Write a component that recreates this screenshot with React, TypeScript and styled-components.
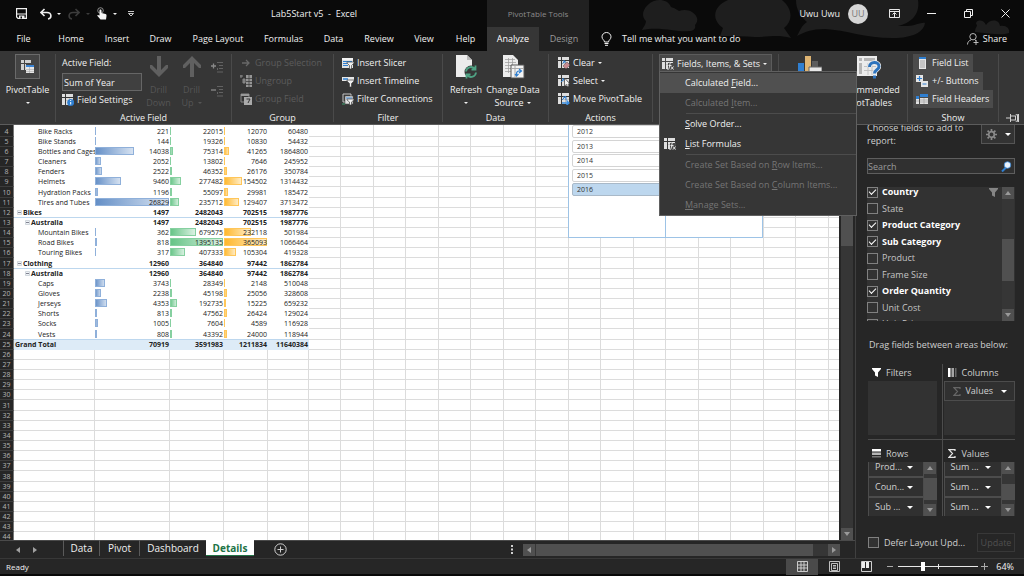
import React from 'react';
import styled, { createGlobalStyle, css } from 'styled-components';

const Global = createGlobalStyle`
  *, *::before, *::after { box-sizing: border-box; }
  body { margin: 0; background: #0a0a0a; }
  button, input { font: inherit; color: inherit; margin: 0; }
  button { background: none; border: 0; padding: 0; }
  svg { display: block; flex: none; }
`;

const Window = styled.div`
  display: flex;
  flex-direction: column;
  height: 100vh;
  overflow: hidden;
  font-family: "Open Sans", "Noto Sans", sans-serif;
  font-size: 9px;
  line-height: 12px;
  color: #f0f0f0;
  white-space: nowrap;
`;

/* ---------- title bar and tabs ---------- */

const Header = styled.header`
  position: relative;
  flex: none;
  background: #0a0a0a;
`;

const Decor = styled.svg`
  position: absolute;
  top: 0;
  right: 0;
`;

const TitleBar = styled.div`
  position: relative;
  display: grid;
  grid-template-columns: 487px 102px 1fr;
  height: 27px;
`;

const QuickAccess = styled.div`
  display: flex;
  align-items: center;
  padding-left: 16px;
`;

const QuickButton = styled.button<{ $w: number }>`
  width: ${p => p.$w}px;
`;

const DocTitle = styled.h1`
  margin: 0 0 0 auto;
  padding-right: 130px;
  font: inherit;
  white-space: pre;
`;

const ToolsTitle = styled.div`
  display: flex;
  align-items: center;
  justify-content: center;
  background: #212121;
  color: #8c8c8c;
  font-size: 8px;
`;

const Account = styled.div`
  display: flex;
  align-items: center;
  justify-content: flex-end;
`;

const Avatar = styled.span`
  width: 20px;
  height: 20px;
  margin: 0 8px;
  border-radius: 50%;
  background: #d6d6d6;
  color: #777;
  line-height: 20px;
  text-align: center;
`;

const WindowButton = styled.button`
  display: grid;
  place-items: center;
  width: 37px;
  height: 27px;
`;

const TabBar = styled.nav`
  position: relative;
  display: flex;
  height: 24px;
`;

const Tab = styled.button<{ $w: number; $active?: boolean; $tool?: boolean }>`
  width: ${p => p.$w}px;
  height: 24px;
  ${p => p.$tool && css`background: #212121; color: #9a9a9a;`}
  ${p => p.$active && css`background: #363636; color: #fff;`}
`;

const TellMe = styled.button`
  display: flex;
  align-items: center;
  gap: 10px;
  margin-left: 12px;
`;

const Share = styled.button`
  display: flex;
  align-items: center;
  gap: 4px;
  margin: 0 17px 0 auto;
`;

/* ---------- ribbon ---------- */

const Ribbon = styled.section`
  position: relative;
  z-index: 3;
  display: flex;
  flex: none;
  height: 74px;
  padding-top: 3px;
  background: #363636;
  border-bottom: 1px solid #5c5c5c;
`;

const Group = styled.div<{ $w: number }>`
  position: relative;
  display: flex;
  flex-direction: column;
  flex: none;
  width: ${p => p.$w}px;
  height: 68px;
  border-right: 1px solid #4a4a4a;
`;

const GroupBody = styled.div<{ $left?: number }>`
  display: flex;
  flex: none;
  align-items: flex-start;
  height: 58px;
  padding-left: ${p => p.$left ?? 7}px;
`;

const GroupLabel = styled.div`
  flex: none;
  text-align: center;
`;

const Stack = styled.div<{ $w?: number }>`
  display: flex;
  flex-direction: column;
  align-items: flex-start;
  width: ${p => (p.$w ? `${p.$w}px` : 'auto')};
`;

const SmallButton = styled.button<{ $dim?: boolean; $on?: boolean }>`
  display: flex;
  align-items: center;
  gap: 3px;
  height: 18px;
  color: ${p => (p.$dim ? '#5c5c5c' : 'inherit')};
  ${p => p.$on && css`background: #4b4b4b; padding: 0 4px 0 3px; gap: 4px;`}
`;

const BigButton = styled.button<{ $w: number; $dim?: boolean }>`
  display: flex;
  flex-direction: column;
  align-items: center;
  width: ${p => p.$w}px;
  flex: none;
  color: ${p => (p.$dim ? '#555' : 'inherit')};
`;

const BigIcon = styled.span<{ $framed?: boolean }>`
  display: grid;
  place-items: center;
  width: 25px;
  height: 25px;
  margin-bottom: 4px;
  ${p => p.$framed && css`background: #444; border: 1px solid #6a6a6a;`}
`;

const Line = styled.span`
  display: flex;
  align-items: center;
  gap: 4px;
  height: 13px;
`;

const FieldLabel = styled.label`
  height: 19px;
  line-height: 18px;
`;

const FieldInput = styled.input`
  width: 80px;
  height: 18px;
  padding: 0 1px;
  background: #404040;
  border: 1px solid #666;
`;

const IconColumn = styled.div`
  display: flex;
  flex-direction: column;
  gap: 13px;
  padding: 8px 0 0 3px;
`;

const DropButton = styled.button`
  display: flex;
  align-items: center;
  gap: 3px;
  width: 113px;
  height: 18px;
  padding-left: 2px;
  background: #484848;
  border: 1px solid #5c5c5c;
  border-bottom: 0;
`;

const PinButton = styled.button`
  margin: auto 5px 2px auto;
`;

const Menu = styled.div`
  position: absolute;
  top: 17px;
  left: 6px;
  z-index: 5;
  width: 198px;
  padding-top: 1px;
  background: #363636;
  border: 1px solid #606060;
`;

const MenuItem = styled.button<{ $active?: boolean; $dim?: boolean }>`
  display: grid;
  grid-template-columns: 21px 1fr;
  align-items: center;
  width: 100%;
  height: 20px;
  padding-left: 4px;
  text-align: left;
  background: ${p => (p.$active ? '#505050' : 'transparent')};
  color: ${p => (p.$dim ? '#757575' : 'inherit')};
`;

const MenuRule = styled.hr`
  margin: 0 0 0 26px;
  border: 0;
  border-top: 1px solid #4c4c4c;
`;

/* ---------- worksheet ---------- */

const Main = styled.main`
  display: grid;
  grid-template-columns: minmax(0, 1fr) 169px;
  flex: 1;
  min-height: 0;
  background: #262626;
`;

const Workbook = styled.div`
  display: flex;
  flex-direction: column;
  min-width: 0;
  min-height: 0;
`;

const SheetArea = styled.div`
  display: flex;
  flex: 1;
  min-height: 0;
`;

const Sheet = styled.div`
  position: relative;
  flex: 1;
  min-width: 0;
  overflow: hidden;
  background: #fff;
`;

const Cells = styled.table`
  width: 1869px;
  table-layout: fixed;
  border-collapse: separate;
  border-spacing: 0;
  font-size: 7px;
  line-height: 9px;
  color: #222;
`;

const SheetRow = styled.tr`
  height: 10px;
  &:nth-child(7n) { height: 11px; }
  &:first-child { height: 12px; vertical-align: bottom; }
`;

const RowHead = styled.th`
  padding: 0;
  background: #262626;
  border-right: 1px solid #777;
  border-bottom: 1px solid #3c3c3c;
  color: #b5b5b5;
  font-weight: 400;
  text-align: center;
`;

const Cell = styled.td<{ $bold?: boolean; $line?: boolean; $total?: boolean; $indent?: number }>`
  padding: 0 1px 0 ${p => p.$indent ?? 0}px;
  font-weight: ${p => (p.$bold ? 700 : 400)};
  border-bottom: 1px solid ${p => (p.$line ? '#bdd7ee' : 'transparent')};
  background: ${p => (p.$total ? '#ddebf7' : '#fff')};
`;

const BlankCell = styled.td`
  padding: 0;
  border-right: 1px solid #dcdcdc;
  border-bottom: 1px solid #dcdcdc;
`;

const Name = styled.span`
  display: flex;
  align-items: center;
  gap: 1px;
  height: 9px;
`;

const Figure = styled.span`
  display: grid;
  grid-template-columns: 1fr;
  height: 9px;
`;

const Amount = styled.span`
  grid-area: 1 / 1;
  z-index: 1;
  text-align: right;
`;

const Bar = styled.span<{ $hue: 'blue' | 'green' | 'orange' }>`
  grid-area: 1 / 1;
  height: 8px;
  min-width: 1px;
  ${p => p.$hue === 'blue' && css`background: linear-gradient(90deg, #638ec6, #d9e4f2); box-shadow: inset 0 0 0 1px #8fb0da;`}
  ${p => p.$hue === 'green' && css`background: linear-gradient(90deg, #63c384, #dff3e6); box-shadow: inset 0 0 0 1px #86d0a0;`}
  ${p => p.$hue === 'orange' && css`background: linear-gradient(90deg, #ffb628, #fff0d0); box-shadow: inset 0 0 0 1px #ffc659;`}
`;

const Slicers = styled.div`
  position: absolute;
  top: 0;
  left: 568px;
  display: flex;
  height: 113px;
  font-size: 7px;
  color: #333;
`;

const Slicer = styled.div`
  display: flex;
  flex-direction: column;
  width: 98px;
  margin-right: -1px;
  padding: 0 3px;
  background: #fff;
  border: 1px solid #9dc3e6;
  border-top: 0;
`;

const SlicerList = styled.div`
  display: flex;
  flex-direction: column;
  justify-content: space-between;
  height: 71px;
`;

const SlicerItem = styled.button<{ $on?: boolean }>`
  height: 13px;
  padding-left: 4px;
  border: 1px solid ${p => (p.$on ? '#a9b9c8' : '#d4d4d4')};
  border-radius: 2px;
  background: ${p => (p.$on ? '#bdd7ee' : '#fff')};
  line-height: 11px;
  text-align: left;
`;

const VScroll = styled.div<{ $w: number }>`
  display: flex;
  flex-direction: column;
  flex: none;
  width: ${p => p.$w}px;
  background: #363636;
`;

const SheetScroll = styled(VScroll)`
  margin: 0 2px;
`;

const ScrollButton = styled.button`
  display: grid;
  place-items: center;
  flex: none;
  width: 12px;
  height: 12px;
  background: #505050;
  color: #9a9a9a;
`;

const Thumb = styled.div<{ $size: number; $start: number }>`
  height: ${p => p.$size}px;
  margin: ${p => p.$start}px 0 auto;
  background: #505050;
`;

const SheetTabs = styled.div`
  display: flex;
  flex: none;
  align-items: center;
  height: 18px;
  padding-right: 15px;
  border-top: 1px solid #4a4a4a;
  font-size: 10px;
`;

const NavArrows = styled.div`
  display: flex;
  gap: 11px;
  width: 63px;
  padding-left: 15px;
  color: #a0a0a0;
`;

const SheetTab = styled.button<{ $w: number; $active?: boolean }>`
  align-self: flex-start;
  width: ${p => p.$w}px;
  height: 16px;
  margin-top: -1px;
  border-left: 1px solid #5a5a5a;
  ${p => p.$active && css`
    background: #fff;
    color: #217346;
    font-weight: 700;
    border-left: 0;
    border-bottom: 1px solid #217346;
  `}
`;

const AddSheet = styled.button`
  margin: 0 auto 0 20px;
`;

const HScroll = styled.div`
  display: flex;
  width: 317px;
  margin-left: 10px;
  background: #363636;
`;

const HThumb = styled.div`
  width: 277px;
  margin: 0 auto 0 1px;
  background: #505050;
`;

/* ---------- field pane ---------- */

const Pane = styled.aside`
  display: flex;
  flex-direction: column;
  min-height: 0;
  padding: 0 9px 0 11px;
  border-left: 1px solid #404040;
  color: #d0d0d0;
  overflow: hidden;
`;

const PaneTop = styled.div`
  display: flex;
  justify-content: space-between;
  height: 33px;
`;

const PaneHint = styled.p`
  width: 105px;
  margin: -4px 0 0;
  line-height: 13px;
  white-space: normal;
`;

const GearButton = styled.button`
  display: flex;
  align-items: center;
  justify-content: center;
  gap: 8px;
  width: 34px;
  height: 19px;
  border: 1px solid #555;
  border-top: 0;
  background: #333;
`;

const SearchBox = styled.label`
  display: flex;
  align-items: center;
  flex: none;
  height: 16px;
  padding-right: 2px;
  background: #303030;
  border: 1px solid #5e5e5e;
`;

const SearchInput = styled.input`
  flex: 1;
  min-width: 0;
  height: 14px;
  padding: 0;
  background: none;
  border: 0;
  &::placeholder { color: #9a9a9a; opacity: 1; }
`;

const FieldBox = styled.div`
  display: flex;
  flex: none;
  height: 134px;
  margin: 13px 0 18px;
  padding-right: 1px;
  overflow: hidden;
  background: #323232;
`;

const FieldRows = styled.div`
  flex: 1;
  margin-top: -3px;
`;

const FieldRow = styled.label<{ $checked: boolean }>`
  display: flex;
  align-items: center;
  gap: 4px;
  height: 16px;
  padding-right: 4px;
  font-weight: ${p => (p.$checked ? 700 : 400)};
  color: ${p => (p.$checked ? '#fff' : '#c4c4c4')};
  &:nth-child(even) { height: 17px; }
  & > svg { margin-left: auto; }
`;

const Check = styled.input`
  appearance: none;
  display: grid;
  place-items: center;
  flex: none;
  width: 11px;
  height: 11px;
  border: 1px solid #808080;
  background: #323232;
  &:checked::before {
    content: "";
    width: 7px;
    height: 4px;
    margin-top: -2px;
    border-left: 1px solid #fff;
    border-bottom: 1px solid #fff;
    transform: rotate(-45deg);
  }
`;

const DragHint = styled.p`
  margin: 0 0 13px 2px;
`;

const Areas = styled.div`
  display: grid;
  grid-template-columns: 1fr 1fr;
  margin-left: 1px;
`;

const Area = styled.section<{ $right?: boolean; $low?: boolean }>`
  padding: ${p => (p.$low ? '5px' : '0')} ${p => (p.$right ? '0' : '5px')} ${p => (p.$low ? '0' : '4px')} ${p => (p.$right ? '1px' : '0')};
  ${p => p.$right && css`border-left: 1px solid #4c4c4c;`}
  ${p => p.$low && css`border-top: 1px solid #4c4c4c;`}
`;

const AreaTitle = styled.h2`
  display: grid;
  grid-template-columns: 14px 1fr;
  align-items: center;
  height: 17px;
  margin: 0;
  padding-left: 4px;
  font: inherit;
`;

const AreaBox = styled.div`
  display: flex;
  height: 54px;
  overflow: hidden;
  background: #323232;
`;

const Chips = styled.div<{ $scrolled?: boolean }>`
  display: flex;
  flex: 1;
  flex-direction: column;
  margin-top: ${p => (p.$scrolled ? '-5px' : '0')};
`;

const Chip = styled.button`
  display: flex;
  align-items: center;
  justify-content: space-between;
  flex: none;
  height: 20px;
  padding: 0 10px 0 6px;
  border: 1px solid #4c4c4c;
  background: #303030;
`;

const ValuesChip = styled(Chip)`
  justify-content: flex-start;
  gap: 5px;
  padding: 0 7px 0 8px;
  & > :last-child { margin-left: auto; }
`;

const PaneFoot = styled.div`
  display: flex;
  align-items: center;
  justify-content: space-between;
  margin: 17px 0 0 1px;
`;

const Defer = styled.label`
  display: flex;
  align-items: center;
  gap: 5px;
`;

const UpdateButton = styled.button`
  width: 38px;
  height: 19px;
  border: 1px solid #383838;
  color: #505050;
`;

/* ---------- status bar ---------- */

const StatusBar = styled.footer`
  display: flex;
  align-items: center;
  flex: none;
  height: 18px;
  padding: 0 10px 0 6px;
  background: #262626;
  border-top: 1px solid #383838;
  border-bottom: 2px solid #080808;
  font-size: 8px;
`;

const ViewButton = styled.button<{ $on?: boolean }>`
  display: grid;
  place-items: center;
  width: 32px;
  height: 16px;
  background: ${p => (p.$on ? '#4a4a4a' : 'transparent')};
`;

const Views = styled.div`
  display: flex;
  margin: 0 5px 0 auto;
`;

const Zoom = styled.input`
  appearance: none;
  width: 80px;
  height: 10px;
  margin: 0 3px 0 4px;
  background: linear-gradient(#e8e8e8, #e8e8e8) center / 100% 1px no-repeat,
    linear-gradient(#e8e8e8, #e8e8e8) center / 1px 5px no-repeat;
  &::-webkit-slider-thumb {
    appearance: none;
    width: 4px;
    height: 9px;
    background: #fff;
  }
`;

const ZoomValue = styled.span`
  width: 26px;
  font-size: 9px;
  text-align: right;
`;

/* ---------- icons ---------- */

const Caret = ({ w = 4, color = 'currentColor' }: { w?: number; color?: string }) => (
  <svg width={w} height={Math.ceil(w / 2)} viewBox="0 0 4 2"><path d="M0 0h4L2 2z" fill={color} /></svg>
);

const Arrow = ({ dir }: { dir: 'up' | 'down' | 'left' | 'right' }) => {
  const d = { up: 'M0 5h6L3 1z', down: 'M0 1h6L3 5z', left: 'M5 0v6L1 3z', right: 'M1 0v6l4-3z' }[dir];
  return <svg width="6" height="6" viewBox="0 0 6 6"><path d={d} fill="currentColor" /></svg>;
};

const Pivot = ({ children }: { children?: React.ReactNode }) => (
  <svg width="12" height="12" viewBox="0 0 12 12">
    <path d="M0 0h3v3H0zM4 0h7v3H4zM0 4h3v7H0zM4 4h7v7H4z" fill="#dedede" />
    <path d="M4 6.500h7M7.500 4v7" stroke="#a0a0a0" strokeWidth=".5" />
    {children}
  </svg>
);

const PivotTableIcon = () => (
  <svg width="13" height="13" viewBox="0 0 13 13">
    <path d="M0 0h3v3H0zM4 0h6v3H4zM0 4h3v6H0zM4 4h1v6H4z" fill="#d0d0d0" />
    <path d="M5 5h8v8H5z" fill="#e6e6e6" /><path d="M5 5h8v2H5z" fill="#3b84d4" />
    <path d="M5 9.500h8M5 11.500h8M8.500 7v6" stroke="#aaa" strokeWidth=".6" />
  </svg>
);

const SettingsIcon = () => (
  <Pivot><circle cx="8.700" cy="8.500" r="3.500" fill="#2f7fd1" /><path d="M8.700 8v2.500M8.700 6v1" stroke="#fff" /></Pivot>
);

const BigArrow = ({ up }: { up?: boolean }) => (
  <svg width="20" height="23" viewBox="0 0 20 23">
    <path d={up ? 'M8 22V8L3 13H1v-3L10 1l9 9v3h-2l-5-5v14z' : 'M8 1v14L3 10H1v3l9 9 9-9v-3h-2l-5 5V1z'} fill="#606060" />
  </svg>
);

const Expand = ({ minus }: { minus?: boolean }) => (
  <svg width="12" height="11" viewBox="0 0 12 11" fill="none" stroke="#626262">
    <path d={minus ? 'M0 4h5' : 'M0 4h5M2.500 1.500v5'} stroke="#8a8a8a" strokeWidth="1.300" />
    <path d="M6 .5h6M8 3.500h4M8 6.500h4M6 10h6M6.500 6v2" />
  </svg>
);

const GroupArrow = () => <svg width="12" height="8" viewBox="0 0 12 8" fill="none" stroke="#686868" strokeWidth="1.300"><path d="M2 4h7M6 1l3 3-3 3" /></svg>;
const UngroupIcon = () => (
  <svg width="12" height="12" viewBox="0 0 12 12"><path d="M0 1h3M1 0v3M3 4h2v4H3z" stroke="#8a8a8a" fill="#777" /><path d="M6 0h6v12H6z" fill="#969696" /><path d="M6 3.500h6M6 6.500h6M6 9.500h6M9 0v12" stroke="#363636" strokeWidth=".7" /></svg>
);
const GroupFieldIcon = () => (
  <svg width="12" height="12" viewBox="0 0 12 12"><path d="M1 1h8v8H1z" fill="none" stroke="#888" /><path d="M1 1h8v2H1z" fill="#999" /><path d="M4 4h8v8H4z" fill="#aaa" /><path d="M6.500 6H10L8 10" fill="none" stroke="#363636" /></svg>
);

const Funnel = ({ size = 9, color = '#fff' }: { size?: number; color?: string }) => (
  <svg width={size} height={size} viewBox="0 0 9 9"><path d="M0 0h9v1L6 4.500V9L3 7.500v-3L0 1z" fill={color} /></svg>
);

const SlicerIcon = () => (
  <svg width="12" height="12" viewBox="0 0 12 12"><path d="M0 1h11v10H0z" fill="#e2e2e2" /><path d="M0 1h11v2H0z" fill="#f4f4f4" /><path d="M1 4.500h9M1 6.500h4M1 8.500h5" stroke="#2f7fd1" /><path d="M5 5h7v1L9.500 8.500V12h-2V8.500L5 6z" fill="#f0f0f0" stroke="#444" strokeWidth=".7" /></svg>
);
const TimelineIcon = () => (
  <svg width="12" height="12" viewBox="0 0 12 12"><path d="M0 2h12v4H0z" fill="#e6e6e6" /><path d="M1 4h5" stroke="#2f7fd1" strokeWidth="1.500" /><path d="M5 5h7v1L9.500 8.500V12h-2V8.500L5 6z" fill="#f0f0f0" stroke="#444" strokeWidth=".7" /></svg>
);
const ConnectionsIcon = () => (
  <svg width="12" height="12" viewBox="0 0 12 12"><path d="M1 1h8v8H1z" fill="none" stroke="#c4c4c4" /><path d="M3 3h8v8H3z" fill="#e2e2e2" stroke="#555" strokeWidth=".6" /><path d="M4 5h6" stroke="#2f7fd1" /><path d="M5 6h7v1L9.500 9v3h-2V9L5 7z" fill="#f0f0f0" stroke="#444" strokeWidth=".7" /><path d="M0 11h3" stroke="#3f9f6f" /></svg>
);

const RefreshIcon = () => (
  <svg width="22" height="25" viewBox="0 0 22 25">
    <path d="M1 1h11l5 5v17H1z" fill="#ececec" /><path d="M12 1v5h5" fill="#bbb" />
    <circle cx="16" cy="18" r="6.500" fill="#363636" />
    <path d="M11 17.500a5 5 0 018.500-3M20.500 11.500v4h-4M21 18.500a5 5 0 01-8.500 3M11.500 24.500v-4h4" fill="none" stroke="#4fa384" strokeWidth="1.800" />
  </svg>
);
const ChangeSourceIcon = () => (
  <svg width="24" height="25" viewBox="0 0 24 25">
    <path d="M2 1h10l5 5v17H2z" fill="#ececec" /><path d="M4 5.500h10M4 8.500h11M4 11.500h11M4 14.500h11M4 17.500h11M7.500 4v15M11.500 4v15" stroke="#999" strokeWidth=".7" />
    <path d="M10 11h13v13H10z" fill="#f3f3f3" stroke="#555" /><path d="M11 14.500h11M14 12v12" stroke="#aaa" />
    <path d="M15.500 22v-2c0-2 1-3 2.500-3h2M18 15l2.500 2-2.500 2M14 20l1.500 2 2-2" fill="none" stroke="#2f7fd1" strokeWidth="1.200" />
  </svg>
);
const ClearIcon = () => <Pivot><path d="M4.500 6.500l2.500-2.500M5 4h2v2" stroke="#2f7fd1" fill="none" /><path d="M9 5l3 3-4 4-3-3z" fill="#c98a90" stroke="#363636" strokeWidth=".4" /></Pivot>;
const SelectIcon = () => <Pivot><path d="M3 7l3-3M4 4h2v2" stroke="#2f7fd1" fill="none" /><path d="M6.500 3v8l2-1.500 1 2.500 1.500-.7-1-2.300H12z" fill="#f4f4f4" stroke="#363636" strokeWidth=".7" /></Pivot>;
const MoveIcon = () => <Pivot><path d="M4 7l4-4M5 4h3v3" stroke="#2f7fd1" fill="none" /><path d="M4 10h7M8.500 7.500L11 10l-2.500 2" stroke="#3b8ee0" strokeWidth="1.400" fill="none" /></Pivot>;
const FieldsIcon = () => <Pivot><path d="M6 5h6v7H6z" fill="#4b4b4b" /><path d="M10 4.500c-2-.5-2 1-2.300 3S7 12 5.500 11.500M6.500 7.500h3M9 8.500l2.500 3M11.500 8.500L9 11.500" stroke="#f0f0f0" fill="none" strokeWidth=".9" /></Pivot>;

const ChartIcon = () => (
  <svg width="25" height="25" viewBox="0 0 25 25"><path d="M1 9h6v14H1z" fill="#2f7fd1" /><path d="M8 2h6v21H8z" fill="#dfb573" /><path d="M15 7h6v16h-6z" fill="#5c5c5c" /><path d="M12 13h13v10H12z" fill="#e8e8e8" stroke="#666" /></svg>
);
const RecommendIcon = () => (
  <svg width="25" height="25" viewBox="0 0 25 25"><path d="M1 2h20v20H1z" fill="#ececec" /><path d="M3 4h3v3H3zM8 4h11v3H8zM3 9h3v11H3z" fill="#b5b5b5" /><path d="M8 12.500h12M8 16.500h12M12 9v12M16 9v12" stroke="#c2c2c2" /><path d="M13.500 13c0-6 9.500-6 9.500-.5 0 3.500-4.500 3-4.500 7" fill="none" stroke="#ececec" strokeWidth="4.500" /><path d="M13.500 13c0-6 9.500-6 9.500-.5 0 3.500-4.500 3-4.500 7M18.500 21.500v3" fill="none" stroke="#2d73bd" strokeWidth="3" /></svg>
);
const FieldListIcon = () => (
  <svg width="12" height="12" viewBox="0 0 12 12"><path d="M3 0h7v12H3z" fill="#e6e6e6" /><path d="M3 0h7v2H3z" fill="#2f7fd1" /><path d="M4 4h5M4 6h5M4 8h5M4 10h5" stroke="#888" strokeWidth=".7" /></svg>
);
const PlusMinusIcon = () => (
  <svg width="12" height="12" viewBox="0 0 12 12"><path d="M0 0h7v7H0zM5 6h7v6H5z" fill="#e6e6e6" /><path d="M1 3.500h5M3.500 1v5M6.500 9h4" stroke="#2f7fd1" strokeWidth="1.200" /></svg>
);
const HeadersIcon = () => (
  <svg width="12" height="12" viewBox="0 0 12 12"><path d="M0 5h3v6H0zM4 5h8v6H4z" fill="#e0e0e0" /><path d="M0 3h3v3H0zM4 1h8v3H4z" fill="#2f7fd1" /><path d="M4 7h8M4 9h8M8 5v6M0 8h3" stroke="#999" strokeWidth=".6" /></svg>
);

const Bulb = () => (
  <svg width="11" height="14" viewBox="0 0 11 14" fill="none" stroke="#f0f0f0"><path d="M3.500 10C3.500 8 1 7.500 1 4.800a4.500 4.300 0 019 0C10 7.500 7.500 8 7.500 10zM3.500 11.500h4M4 13.300h3" /></svg>
);
const ShareIcon = () => (
  <svg width="12" height="12" viewBox="0 0 12 12" fill="none" stroke="#c8c8c8" strokeWidth=".9"><circle cx="6" cy="3.700" r="3.200" /><path d="M.5 11.500c0-2.500 1.500-4 3.500-4.500M8 7l1.500 1M6.500 9.500h5M9 7v5" /></svg>
);
const Pin = () => <svg width="13" height="8" viewBox="0 0 13 8" fill="none" stroke="#d0d0d0"><path d="M0 4h4.500M4.500 0v8M4.500 2h5v4h-5M9.500 1l2-.5v7L9.500 7M12.500 0v8" /></svg>;

const Gear = () => (
  <svg width="11" height="11" viewBox="0 0 11 11"><circle cx="5.500" cy="5.500" r="2.800" fill="none" stroke="#8a8a8a" strokeWidth="1.700" /><path d="M5.500 0v2M5.500 9v2M0 5.500h2M9 5.500h2M1.600 1.600l1.500 1.500M7.900 7.900l1.500 1.500M1.600 9.400l1.500-1.500M7.900 3.100l1.500-1.500" stroke="#8a8a8a" strokeWidth="1.700" /></svg>
);
const SearchIcon = () => <svg width="11" height="11" viewBox="0 0 11 11"><path d="M1 10.500L5 6.500" stroke="#2f7fd1" strokeWidth="2" /><circle cx="6.500" cy="4" r="3.300" fill="#e8f2fc" stroke="#2f7fd1" strokeWidth=".8" /></svg>;
const ColumnsIcon = () => <svg width="9" height="9" viewBox="0 0 9 9"><path d="M0 0h2.500v9H0z" fill="#fff" /><path d="M3.500 0H6v9H3.500z" fill="#a5a5a5" /><path d="M7 0h1.500v9H7z" fill="#666" /></svg>;
const RowsIcon = () => <svg width="9" height="9" viewBox="0 0 9 9"><path d="M0 0h9v2.500H0z" fill="#fff" /><path d="M0 3.500h9V6H0z" fill="#b5b5b5" /><path d="M0 7h9v1.500H0z" fill="#777" /></svg>;
const Sigma = ({ color = '#e6e6e6' }: { color?: string }) => <svg width="8" height="9" viewBox="0 0 8 9"><path d="M7 2V.7H1L4.500 4.500 1 8.300h6V7" fill="none" stroke={color} strokeWidth="1.200" /></svg>;

/* ---------- data ---------- */

type Row = { name: string; level: 0 | 1 | 2; v: [number, number, number, number]; total?: boolean };

const rows: Row[] = [
  { name: 'Bike Racks', level: 2, v: [221, 22015, 12070, 60480] },
  { name: 'Bike Stands', level: 2, v: [144, 19326, 10830, 54432] },
  { name: 'Bottles and Cages', level: 2, v: [14038, 75314, 41265, 1864800] },
  { name: 'Cleaners', level: 2, v: [2052, 13802, 7646, 245952] },
  { name: 'Fenders', level: 2, v: [2522, 46352, 26176, 350784] },
  { name: 'Helmets', level: 2, v: [9460, 277482, 154502, 1314432] },
  { name: 'Hydration Packs', level: 2, v: [1196, 55097, 29981, 185472] },
  { name: 'Tires and Tubes', level: 2, v: [26829, 235712, 129407, 3713472] },
  { name: 'Bikes', level: 0, v: [1497, 2482043, 702515, 1987776] },
  { name: 'Australia', level: 1, v: [1497, 2482043, 702515, 1987776] },
  { name: 'Mountain Bikes', level: 2, v: [362, 679575, 232118, 501984] },
  { name: 'Road Bikes', level: 2, v: [818, 1395135, 365093, 1066464] },
  { name: 'Touring Bikes', level: 2, v: [317, 407333, 105304, 419328] },
  { name: 'Clothing', level: 0, v: [12960, 364840, 97442, 1862784] },
  { name: 'Australia', level: 1, v: [12960, 364840, 97442, 1862784] },
  { name: 'Caps', level: 2, v: [3743, 28349, 2148, 510048] },
  { name: 'Gloves', level: 2, v: [2238, 45198, 25056, 328608] },
  { name: 'Jerseys', level: 2, v: [4353, 192735, 15225, 659232] },
  { name: 'Shorts', level: 2, v: [813, 47562, 26424, 129024] },
  { name: 'Socks', level: 2, v: [1005, 7604, 4589, 116928] },
  { name: 'Vests', level: 2, v: [808, 43392, 24000, 118944] },
  { name: 'Grand Total', level: 0, v: [70919, 3591983, 1211834, 11640384], total: true },
];

const FIRST_ROW = 4;
const LAST_ROW = 44;
const EXTRA_COLUMNS = 48;
const hues = ['blue', 'green', 'orange'] as const;
const peaks = [26829, 1395135, 365093];
const indents = { 0: 3, 1: 11, 2: 24 };

const Collapse = () => (
  <svg width="5" height="5" viewBox="0 0 5 5"><path d="M.5.5h4v4h-4z" fill="#eef2f6" stroke="#c0c8d0" strokeWidth=".7" /><path d="M1 2.500h3" stroke="#667" strokeWidth=".8" /></svg>
);

const Worksheet = () => (
  <Cells>
    <colgroup>
      {[14, 81, 75, 54, 44, 41].map((w, i) => <col key={i} style={{ width: w }} />)}
      {Array.from({ length: EXTRA_COLUMNS }, (_, i) => <col key={i} style={{ width: i % 2 ? 33 : 32 }} />)}
    </colgroup>
    <tbody>
      {Array.from({ length: LAST_ROW - FIRST_ROW + 1 }, (_, i) => {
        const row = rows[i];
        const blanks = row ? EXTRA_COLUMNS : EXTRA_COLUMNS + 5;
        const look = row && {
          $bold: row.level < 2,
          $total: row.total,
          $line: (row.level === 0 && !row.total) || rows[i + 1]?.total,
        };
        return (
          <SheetRow key={i}>
            <RowHead scope="row">{FIRST_ROW + i}</RowHead>
            {row && (
              <Cell {...look} $indent={row.total ? 1 : indents[row.level]}>
                <Name>{row.level < 2 && !row.total && <Collapse />}{row.name}</Name>
              </Cell>
            )}
            {row?.v.map((n, c) => (
              <Cell key={c} {...look}>
                <Figure>
                  {row.level === 2 && c < 3 && (
                    <Bar $hue={hues[c]} style={{ width: `${(n / peaks[c]) * 100}%` }} />
                  )}
                  <Amount>{n}</Amount>
                </Figure>
              </Cell>
            ))}
            {Array.from({ length: blanks }, (_, b) => <BlankCell key={b} />)}
          </SheetRow>
        );
      })}
    </tbody>
  </Cells>
);

const tabs: [string, number][] = [
  ['File', 47], ['Home', 48], ['Insert', 44], ['Draw', 43], ['Page Layout', 72], ['Formulas', 59],
  ['Data', 41], ['Review', 50], ['View', 40], ['Help', 43],
];

const fields: [string, boolean][] = [
  ['Country', true], ['State', false], ['Product Category', true], ['Sub Category', true],
  ['Product', false], ['Frame Size', false], ['Order Quantity', true], ['Unit Cost', false], ['Unit Price', false],
];

const ScrollingArea = ({ names, size, start }: { names: string[]; size: number; start: number }) => (
  <AreaBox>
    <Chips $scrolled>
      {names.map((n, i) => <Chip key={i}>{n}<Caret w={6} color="#fff" /></Chip>)}
    </Chips>
    <VScroll $w={13}>
      <ScrollButton aria-label="Scroll up"><Arrow dir="up" /></ScrollButton>
      <Thumb $size={size} $start={start} />
      <ScrollButton aria-label="Scroll down"><Arrow dir="down" /></ScrollButton>
    </VScroll>
  </AreaBox>
);

export default function App() {
  return (
    <Window>
      <Global />
      <Header>
        <Decor width="420" height="51" viewBox="0 0 420 51">
          <g fill="#1e1e1e">
            <path d="M38 30c2-4 4-6 4-9-8-8 2-18 8-20 6-2 14-1 17 6 6 2 6 3 8 4 8-3 16 1 18 7 1 3-1 6-2 7 1 3-1 6-6 6-10 2-28-5-47-1z" />
            <path d="M124 0h54c12 10 10 22 2 28l7 10c-14-4-22-1-36-1-10-1-22-1-35-1l3-8c-12-8-10-22 5-28z" />
            <path d="M192 0h122c2 12-4 22-20 26h10c6 0 14-4 17-3-1 8-10 14-28 15-30 1-50-8-72-9-14 0-20 3-28 7 3-5 4-10 10-14-7-6-11-13-11-22z" />
            <path d="M371 32c0-4 2-5 2-7-4-4 6-8 9 0 4-6 13-6 14 1 6-1 10 2 9 7-8 3-20 0-34-1z" />
          </g>
        </Decor>
        <TitleBar>
          <QuickAccess>
            <QuickButton $w={24} aria-label="Save">
              <svg width="11" height="11" viewBox="0 0 11 11"><path d="M.6.6h9.800v9.800H2L.6 9z" fill="none" stroke="#f0f0f0" strokeWidth="1.200" /><path d="M1 5.500h9v1H1zM3 7.500h5.500V11H3z" fill="#f0f0f0" /><path d="M4.500 8.500h1.500v2H4.500z" fill="#0a0a0a" /></svg>
            </QuickButton>
            <QuickButton $w={17} aria-label="Undo">
              <svg width="12" height="12" viewBox="0 0 12 12" fill="none" stroke="#f0f0f0" strokeWidth="1.600"><path d="M4.500 1L1 4.500 4.500 8M1.500 4.500H7c5 0 5 6 1 6.500" /></svg>
            </QuickButton>
            <QuickButton $w={11} aria-label="Undo list"><Caret /></QuickButton>
            <QuickButton $w={18} aria-label="Redo">
              <svg width="12" height="12" viewBox="0 0 12 12" fill="none" stroke="#3c3c3c" strokeWidth="1.600"><path d="M7.500 1L11 4.500 7.500 8M10.500 4.500H5c-5 0-5 6-1 6.500" /></svg>
            </QuickButton>
            <QuickButton $w={11} aria-label="Redo list"><Caret color="#3c3c3c" /></QuickButton>
            <QuickButton $w={16} aria-label="Touch mode">
              <svg width="10" height="13" viewBox="0 0 10 13"><circle cx="3.500" cy="3.500" r="2.800" fill="none" stroke="#aaa" strokeWidth=".8" /><path d="M2.500 3.500c0-1.500 2-1.500 2 0V6l4 1c1 .3 1 1 1 2L9 12.500H3.500L.5 9c-.5-1 .5-1.500 2-.5z" fill="#f4f4f4" /></svg>
            </QuickButton>
            <QuickButton $w={15} aria-label="Touch mode list"><Caret /></QuickButton>
            <QuickButton $w={8} aria-label="Customize toolbar">
              <svg width="6" height="6" viewBox="0 0 6 6" fill="none" stroke="#ddd" strokeWidth=".9"><path d="M0 .5h6M.5 2.500h5L3 5z" /></svg>
            </QuickButton>
            <DocTitle>Lab5Start v5  -  Excel</DocTitle>
          </QuickAccess>
          <ToolsTitle>PivotTable Tools</ToolsTitle>
          <Account>
            Uwu Uwu<Avatar>UU</Avatar>
            <WindowButton aria-label="Ribbon display options">
              <svg width="11" height="9" viewBox="0 0 11 9" fill="none" stroke="#e8e8e8"><path d="M.5.5h10v8H.5zM.5 2.500h10M5.500 8V4M3.500 5.500l2-2 2 2" /></svg>
            </WindowButton>
            <WindowButton aria-label="Minimize">
              <svg width="9" height="9" viewBox="0 0 9 9"><path d="M0 4.500h9" stroke="#f0f0f0" /></svg>
            </WindowButton>
            <WindowButton aria-label="Restore">
              <svg width="9" height="9" viewBox="0 0 9 9" fill="none" stroke="#f0f0f0"><path d="M.5 2.500h6v6h-6zM2.500 2V.5h6v6H7" /></svg>
            </WindowButton>
            <WindowButton aria-label="Close">
              <svg width="9" height="9" viewBox="0 0 9 9"><path d="M.5.5l8 8M8.500.5l-8 8" stroke="#f0f0f0" /></svg>
            </WindowButton>
          </Account>
        </TitleBar>
        <TabBar>
          {tabs.map(([t, w]) => <Tab key={t} $w={w}>{t}</Tab>)}
          <Tab $w={52} $tool $active>Analyze</Tab>
          <Tab $w={50} $tool>Design</Tab>
          <TellMe><Bulb />Tell me what you want to do</TellMe>
          <Share><ShareIcon />Share</Share>
        </TabBar>
      </Header>

      <Ribbon>
        <Group $w={56}>
          <GroupBody $left={0}>
            <BigButton $w={55}>
              <BigIcon $framed><PivotTableIcon /></BigIcon>
              <Line>PivotTable</Line><Line><Caret /></Line>
            </BigButton>
          </GroupBody>
        </Group>
        <Group $w={176}>
          <GroupBody $left={6}>
            <Stack $w={80}>
              <FieldLabel htmlFor="active-field">Active Field:</FieldLabel>
              <FieldInput id="active-field" defaultValue="Sum of Year" />
              <SmallButton><SettingsIcon />Field Settings</SmallButton>
            </Stack>
            <BigButton $w={33} $dim>
              <BigIcon><BigArrow /></BigIcon><Line>Drill</Line><Line>Down</Line>
            </BigButton>
            <BigButton $w={33} $dim>
              <BigIcon><BigArrow up /></BigIcon><Line>Drill</Line><Line>Up <Caret /></Line>
            </BigButton>
            <IconColumn><Expand /><Expand minus /></IconColumn>
          </GroupBody>
          <GroupLabel>Active Field</GroupLabel>
        </Group>
        <Group $w={102}>
          <GroupBody $left={8}>
            <Stack>
              <SmallButton $dim><GroupArrow />Group Selection</SmallButton>
              <SmallButton $dim><UngroupIcon />Ungroup</SmallButton>
              <SmallButton $dim><GroupFieldIcon />Group Field</SmallButton>
            </Stack>
          </GroupBody>
          <GroupLabel>Group</GroupLabel>
        </Group>
        <Group $w={109}>
          <GroupBody $left={8}>
            <Stack>
              <SmallButton><SlicerIcon />Insert Slicer</SmallButton>
              <SmallButton><TimelineIcon />Insert Timeline</SmallButton>
              <SmallButton><ConnectionsIcon />Filter Connections</SmallButton>
            </Stack>
          </GroupBody>
          <GroupLabel>Filter</GroupLabel>
        </Group>
        <Group $w={106}>
          <GroupBody $left={5}>
            <BigButton $w={36}>
              <BigIcon><RefreshIcon /></BigIcon><Line>Refresh</Line><Line><Caret /></Line>
            </BigButton>
            <BigButton $w={58}>
              <BigIcon><ChangeSourceIcon /></BigIcon><Line>Change Data</Line><Line>Source <Caret /></Line>
            </BigButton>
          </GroupBody>
          <GroupLabel>Data</GroupLabel>
        </Group>
        <Group $w={104}>
          <GroupBody $left={9}>
            <Stack>
              <SmallButton><ClearIcon />Clear <Caret /></SmallButton>
              <SmallButton><SelectIcon />Select <Caret /></SmallButton>
              <SmallButton><MoveIcon />Move PivotTable</SmallButton>
            </Stack>
          </GroupBody>
          <GroupLabel>Actions</GroupLabel>
        </Group>
        <Group $w={126}>
          <GroupBody $left={6}>
            <DropButton aria-expanded="true"><FieldsIcon />Fields, Items, &amp; Sets <Caret /></DropButton>
          </GroupBody>
          <Menu role="menu">
            <MenuItem role="menuitem" $active><i /><span>Calculated <u>F</u>ield...</span></MenuItem>
            <MenuItem role="menuitem" $dim><i /><span>Calculated <u>I</u>tem...</span></MenuItem>
            <MenuRule />
            <MenuItem role="menuitem"><i /><span><u>S</u>olve Order...</span></MenuItem>
            <MenuItem role="menuitem"><FieldsIcon /><span><u>L</u>ist Formulas</span></MenuItem>
            <MenuRule />
            <MenuItem role="menuitem" $dim><i /><span>Create Set Based on <u>R</u>ow Items...</span></MenuItem>
            <MenuItem role="menuitem" $dim><i /><span>Create Set Based on <u>C</u>olumn Items...</span></MenuItem>
            <MenuItem role="menuitem" $dim><i /><span><u>M</u>anage Sets...</span></MenuItem>
          </Menu>
        </Group>
        <Group $w={129}>
          <GroupBody $left={0}>
            <BigButton $w={61} aria-label="PivotChart"><BigIcon><ChartIcon /></BigIcon></BigButton>
            <BigButton $w={56}>
              <BigIcon><RecommendIcon /></BigIcon><Line>Recommended</Line><Line>PivotTables</Line>
            </BigButton>
          </GroupBody>
        </Group>
        <Group $w={91}>
          <GroupBody $left={5}>
            <Stack>
              <SmallButton $on><FieldListIcon />Field List</SmallButton>
              <SmallButton $on><PlusMinusIcon />+/- Buttons</SmallButton>
              <SmallButton $on><HeadersIcon />Field Headers</SmallButton>
            </Stack>
          </GroupBody>
          <GroupLabel>Show</GroupLabel>
        </Group>
        <PinButton aria-label="Pin the ribbon"><Pin /></PinButton>
      </Ribbon>

      <Main>
        <Workbook>
          <SheetArea>
            <Sheet>
              <Worksheet />
              <Slicers>
                <Slicer>
                  <SlicerList>
                    {['2012', '2013', '2014', '2015', '2016'].map(y => <SlicerItem key={y} $on={y === '2016'}>{y}</SlicerItem>)}
                  </SlicerList>
                </Slicer>
                <Slicer />
              </Slicers>
            </Sheet>
            <SheetScroll $w={12}>
              <Thumb $size={106} $start={15} />
              <ScrollButton aria-label="Scroll down"><Arrow dir="down" /></ScrollButton>
            </SheetScroll>
          </SheetArea>
          <SheetTabs>
            <NavArrows><Arrow dir="left" /><Arrow dir="right" /></NavArrows>
            <SheetTab $w={36}>Data</SheetTab>
            <SheetTab $w={40}>Pivot</SheetTab>
            <SheetTab $w={67}>Dashboard</SheetTab>
            <SheetTab $w={48} $active>Details</SheetTab>
            <AddSheet aria-label="New sheet">
              <svg width="13" height="13" viewBox="0 0 13 13" fill="none" stroke="#d0d0d0"><circle cx="6.500" cy="6.500" r="5.700" /><path d="M3.500 6.500h6M6.500 3.500v6" /></svg>
            </AddSheet>
            <svg width="2" height="9" viewBox="0 0 2 9"><path d="M0 0h2v2H0zM0 3.500h2v2H0zM0 7h2v2H0z" fill="#d0d0d0" /></svg>
            <HScroll>
              <ScrollButton aria-label="Scroll left"><Arrow dir="left" /></ScrollButton>
              <HThumb />
              <ScrollButton aria-label="Scroll right"><Arrow dir="right" /></ScrollButton>
            </HScroll>
          </SheetTabs>
        </Workbook>

        <Pane>
          <PaneTop>
            <PaneHint>Choose fields to add to report:</PaneHint>
            <GearButton aria-label="Tools"><Gear /><Caret w={6} color="#fff" /></GearButton>
          </PaneTop>
          <SearchBox><SearchInput type="text" placeholder="Search" aria-label="Search fields" /><SearchIcon /></SearchBox>
          <FieldBox>
            <FieldRows>
              {fields.map(([name, on], i) => (
                <FieldRow key={name} $checked={on}>
                  <Check type="checkbox" defaultChecked={on} />{name}
                  {i === 0 && <Funnel color="#858585" />}
                </FieldRow>
              ))}
            </FieldRows>
            <VScroll $w={12}>
              <ScrollButton aria-label="Scroll up"><Arrow dir="up" /></ScrollButton>
              <Thumb $size={42} $start={40} />
              <ScrollButton aria-label="Scroll down"><Arrow dir="down" /></ScrollButton>
            </VScroll>
          </FieldBox>
          <DragHint>Drag fields between areas below:</DragHint>
          <Areas>
            <Area>
              <AreaTitle><Funnel />Filters</AreaTitle>
              <AreaBox />
            </Area>
            <Area $right>
              <AreaTitle><ColumnsIcon />Columns</AreaTitle>
              <AreaBox><Chips><ValuesChip><Sigma color="#666" />Values<Caret w={6} color="#fff" /></ValuesChip></Chips></AreaBox>
            </Area>
            <Area $low>
              <AreaTitle><RowsIcon />Rows</AreaTitle>
              <ScrollingArea names={['Prod...', 'Coun...', 'Sub ...']} size={22} start={4} />
            </Area>
            <Area $right $low>
              <AreaTitle><Sigma />Values</AreaTitle>
              <ScrollingArea names={['Sum ...', 'Sum ...', 'Sum ...']} size={16} start={10} />
            </Area>
          </Areas>
          <PaneFoot>
            <Defer><Check type="checkbox" />Defer Layout Upd...</Defer>
            <UpdateButton disabled>Update</UpdateButton>
          </PaneFoot>
        </Pane>
      </Main>

      <StatusBar>
        Ready
        <Views>
          <ViewButton $on aria-label="Normal view">
            <svg width="11" height="11" viewBox="0 0 11 11" fill="none" stroke="#d8d8d8" strokeWidth=".9"><path d="M.5.5h10v10H.5zM.5 4h10M.5 7h10M4 .5v10M7 .5v10" /></svg>
          </ViewButton>
          <ViewButton aria-label="Page layout view">
            <svg width="11" height="11" viewBox="0 0 11 11" fill="none" stroke="#d0d0d0" strokeWidth=".9"><path d="M.5.5h10v10H.5zM2.500 2.500h6v7h-6zM4 4.500h3M4 6h3M4 7.500h3" /></svg>
          </ViewButton>
          <ViewButton aria-label="Page break view">
            <svg width="11" height="11" viewBox="0 0 11 11"><path d="M.5.5h10v10H.5z" fill="none" stroke="#d0d0d0" /><path d="M1 1h3v6H1zM5 1h3v6H5z" fill="#eee" /></svg>
          </ViewButton>
        </Views>
        <svg width="7" height="7" viewBox="0 0 7 7"><path d="M0 3.500h6" stroke="#aaa" /></svg>
        <Zoom type="range" min={0} max={100} defaultValue={30} aria-label="Zoom" />
        <svg width="7" height="7" viewBox="0 0 7 7"><path d="M0 3.500h7M3.500 0v7" stroke="#aaa" /></svg>
        <ZoomValue>64%</ZoomValue>
      </StatusBar>
    </Window>
  );
}
